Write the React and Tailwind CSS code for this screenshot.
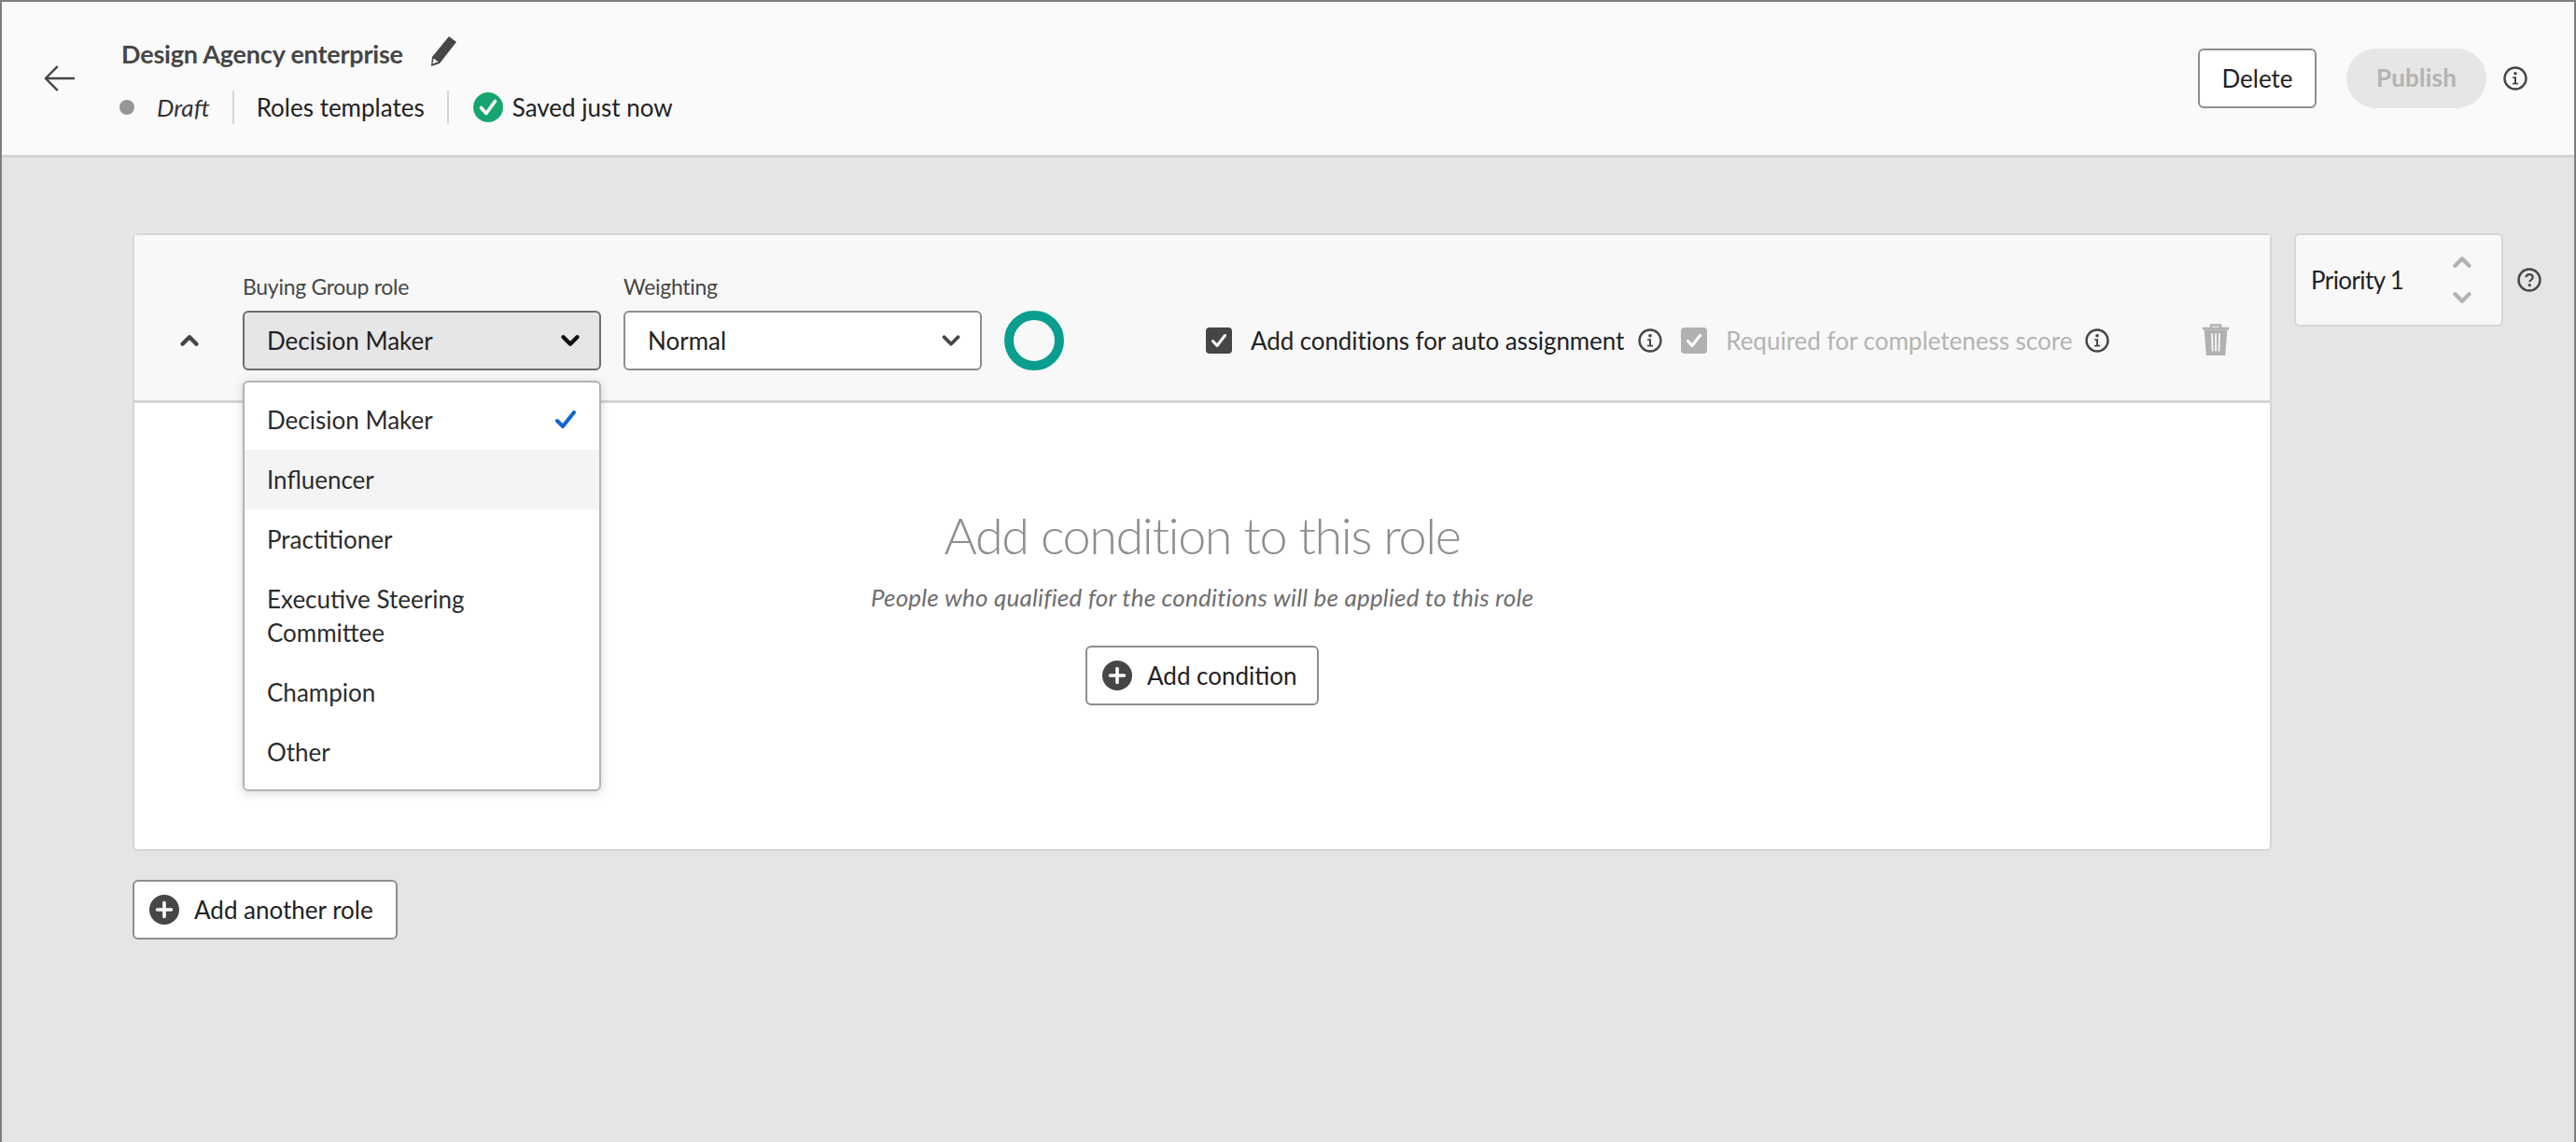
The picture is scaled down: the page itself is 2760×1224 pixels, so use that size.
import { ChevronDown, ChevronUp } from 'lucide-react'

const roles = ['Decision Maker', 'Influencer', 'Practitioner', 'Executive Steering Committee', 'Champion', 'Other']

function InfoIcon({ className = '' }) {
  return (
    <svg viewBox="0 0 26 26" className={`h-[26px] w-[26px] shrink-0 ${className}`}>
      <circle cx="13" cy="13" r="11.5" fill="none" stroke="#464646" strokeWidth="2.4" />
      <circle cx="13" cy="7.8" r="1.8" fill="#464646" />
      <path d="M10.2 11.2h3.8v6.6h2v1.8h-6v-1.8h2v-4.8h-1.8z" fill="#464646" />
    </svg>
  )
}

function HelpIcon() {
  return (
    <svg viewBox="0 0 26 26" className="h-[26px] w-[26px] shrink-0">
      <circle cx="13" cy="13" r="11.5" fill="none" stroke="#464646" strokeWidth="2.4" />
      <path d="M9.4 10.2c.3-2 1.8-3 3.7-3 2.1 0 3.6 1.2 3.6 3 0 1.500-1 2.200-2 2.900-.9.6-1.300 1.100-1.300 2.200" fill="none" stroke="#464646" strokeWidth="2.200" />
      <circle cx="13.300" cy="18.600" r="1.600" fill="#464646" />
    </svg>
  )
}

function PlusIcon() {
  return (
    <svg viewBox="0 0 32 32" className="h-8 w-8 shrink-0">
      <circle cx="16" cy="16" r="16" fill="#464646" />
      <path d="M16 8.500v15M8.500 16h15" stroke="#fff" strokeWidth="3.600" strokeLinecap="round" />
    </svg>
  )
}

function Checkbox({ disabled }) {
  return (
    <span className={`grid h-7 w-7 shrink-0 place-items-center rounded-[4px] ${disabled ? 'bg-[#b1b1b1]' : 'bg-[#464646]'}`}>
      <svg viewBox="0 0 28 28" className="h-7 w-7">
        <path d="M7.500 14.500l4.500 5 8.500-11" fill="none" stroke="#fff" strokeWidth="3" strokeLinecap="round" strokeLinejoin="round" />
      </svg>
    </span>
  )
}

function Header() {
  return (
    <header className="flex h-[167px] shrink-0 items-center border-b-[3px] border-[#d3d3d3] bg-[#fafafa] pl-[44px] pr-[50px]">
      <svg viewBox="0 0 36 30" className="h-[30px] w-[34px] shrink-0">
        <path d="M35 15H3M16 2 3 15l13 13" fill="none" stroke="#464646" strokeWidth="2.600" strokeLinecap="round" strokeLinejoin="round" />
      </svg>
      <div className="ml-[50px] flex flex-col pt-[3px]">
        <div className="flex h-[40px] items-center">
          <span className="text-[27px] font-bold tracking-[-0.2px] text-[#464646]">Design Agency enterprise</span>
          <svg viewBox="0 0 32 32" className="mb-[6px] ml-[25px] h-8 w-8 shrink-0">
            <path d="M24 0l8 6-18 23-9 3 1-10z" fill="#464646" />
            <path d="M7.500 23.500l5 3.800-6 2.200z" fill="#fafafa" />
          </svg>
        </div>
        <div className="mt-[19px] flex h-9 items-center text-[26px] text-[#222]">
          <span className="ml-[-2px] h-4 w-4 rounded-full bg-[#959595]" />
          <span className="ml-6 italic text-[#333]">Draft</span>
          <span className="ml-6 h-9 w-[2px] bg-[#d5d5d5]" />
          <span className="ml-6">Roles templates</span>
          <span className="ml-6 h-9 w-[2px] bg-[#d5d5d5]" />
          <svg viewBox="0 0 32 32" className="ml-[26px] h-8 w-8 shrink-0">
            <circle cx="16" cy="16" r="16" fill="#16a56e" />
            <path d="M8.500 16.500l5.500 6 9.500-13" fill="none" stroke="#fff" strokeWidth="3.600" strokeLinecap="round" strokeLinejoin="round" />
          </svg>
          <span className="ml-[10px]">Saved just now</span>
        </div>
      </div>
      <div className="ml-auto flex items-center">
        <button className="h-16 w-[127px] rounded-[6px] border-2 border-[#8e8e8e] bg-white text-[26px] text-[#222]">Delete</button>
        <button className="ml-8 h-16 w-[150px] rounded-full bg-[#e6e6e6] pb-[2px] text-[26px] font-bold tracking-[0.2px] text-[#b3b3b3]">Publish</button>
        <InfoIcon className="ml-[18px]" />
      </div>
    </header>
  )
}

function RoleDropdown() {
  return (
    <div className="absolute left-0 top-[117px] z-10 w-[384px] rounded-[6px] border-2 border-[#b3b3b3] bg-white py-[8px] shadow-[0_2px_12px_rgba(0,0,0,0.16)]">
      {roles.map((role, i) => (
        <div key={role} className={`flex items-center justify-between px-[24px] py-[14px] text-[26px] leading-[36px] text-[#2c2c2c] ${i === 1 ? 'bg-[#f4f4f4]' : ''}`}>
          <span className={i === 3 ? 'w-[240px]' : ''}>{role}</span>
          {i === 0 && (
            <svg viewBox="0 0 22 20" className="mr-[1px] h-5 w-[22px]">
              <path d="M2 11l6 6L20 2" fill="none" stroke="#0d66d0" strokeWidth="4" strokeLinecap="round" strokeLinejoin="round" />
            </svg>
          )}
        </div>
      ))}
    </div>
  )
}

function RoleCard() {
  return (
    <section className="w-[2292px] overflow-visible rounded-[6px] border-2 border-[#d6d6d6] bg-white">
      <div className="flex h-[180px] items-end border-b-[3px] border-[#d6d6d6] bg-[#f8f8f8] pb-[32px] pl-[44px] pr-[43px]">
        <ChevronUp size={30} strokeWidth={3.500} className="mb-[17px] text-[#464646]" />
        <div className="relative ml-[42px] w-[384px]">
          <label className="mb-[10px] block text-[23px] leading-[32px] tracking-[-0.3px] text-[#464646]">Buying Group role</label>
          <div className="flex h-16 items-center justify-between rounded-[6px] border-2 border-[#6e6e6e] bg-[#e6e6e6] pl-6 pr-[16px] text-[26px] text-[#222]">
            Decision Maker
            <ChevronDown size={30} strokeWidth={3.500} className="text-[#111]" />
          </div>
          <RoleDropdown />
        </div>
        <div className="ml-6 w-[384px]">
          <label className="mb-[10px] block text-[23px] leading-[32px] tracking-[-0.3px] text-[#464646]">Weighting</label>
          <div className="flex h-16 items-center justify-between rounded-[6px] border-2 border-[#8e8e8e] bg-white pl-6 pr-[16px] text-[26px] text-[#222]">
            Normal
            <ChevronDown size={30} strokeWidth={3} className="text-[#464646]" />
          </div>
        </div>
        <span className="ml-6 h-16 w-16 shrink-0 rounded-full border-[10px] border-[#0a9e90]" />
        <div className="ml-[152px] flex h-16 items-center text-[26px]">
          <Checkbox />
          <span className="ml-5 tracking-[-0.1px] text-[#222]">Add conditions for auto assignment</span>
          <InfoIcon className="ml-[15px]" />
          <span className="ml-[20px]"><Checkbox disabled /></span>
          <span className="ml-[20px] text-[#b3b3b3]">Required for completeness score</span>
          <InfoIcon className="ml-[14px]" />
        </div>
        <svg viewBox="0 0 30 34" className="mb-[16px] ml-auto h-[34px] w-[30px] shrink-0">
          <path d="M10 4V1.500h10V4M1 5h28M4 8l2 25h18l2-25z" fill="none" stroke="#b1b1b1" strokeWidth="2.500" />
          <path d="M4 8l2 25h18l2-25zM1 4h28v2.500H1z" fill="#b1b1b1" />
          <path d="M11 10.500l.6 19M15 10.500v19M19 10.500l-.6 19" stroke="#f8f8f8" strokeWidth="1.800" />
        </svg>
      </div>
      <div className="flex h-[478px] flex-col items-center pt-[119px]">
        <h2 className="text-[54px] font-light leading-[46px] tracking-[-1.4px] text-[#8e8e8e]">Add condition to this role</h2>
        <p className="mt-[25px] text-[26px] italic leading-[36px] tracking-[0.2px] text-[#6e6e6e]">People who qualified for the conditions will be applied to this role</p>
        <button className="mt-[34px] flex h-16 w-[250px] items-center rounded-[6px] border-2 border-[#8e8e8e] bg-white pl-[16px] text-[26px] text-[#222]">
          <PlusIcon />
          <span className="ml-[16px]">Add condition</span>
        </button>
      </div>
    </section>
  )
}

export default function App() {
  return (
    <div className="flex h-screen w-screen flex-col border-x-2 border-t-2 border-[#7d7d7d] bg-[#e5e5e5] font-['Lato',sans-serif]">
      <Header />
      <main className="pl-[140px] pt-[81px]">
        <div className="flex items-start">
          <RoleCard />
          <div className="ml-6 flex h-[100px] w-[224px] items-center justify-between rounded-[6px] border-2 border-[#d6d6d6] bg-[#f8f8f8] pl-4 pr-[27px]">
            <span className="text-[26px] tracking-[-0.6px] text-[#222]">Priority 1</span>
            <div className="flex flex-col gap-[8px] text-[#b3b3b3]">
              <ChevronUp size={30} strokeWidth={3.500} />
              <ChevronDown size={30} strokeWidth={3.500} />
            </div>
          </div>
          <span className="ml-[15px] mt-[37px]"><HelpIcon /></span>
        </div>
        <button className="mt-[31px] flex h-16 w-[284px] items-center rounded-[6px] border-2 border-[#8e8e8e] bg-white pl-[16px] text-[26px] text-[#222]">
          <PlusIcon />
          <span className="ml-[16px]">Add another role</span>
        </button>
      </main>
    </div>
  )
}
